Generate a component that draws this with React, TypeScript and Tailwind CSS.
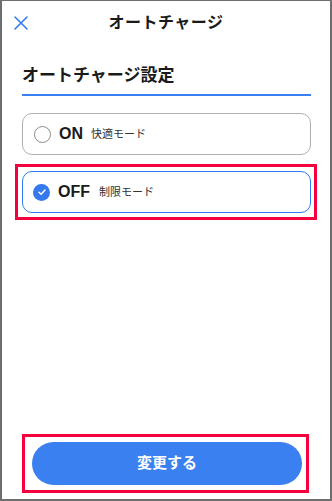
import React from "react";

const JP = { fontFamily: '"Liberation Sans", Arial, "Noto Sans CJK JP", sans-serif' };

export default function App() {
  return (
    <div
      style={JP}
      className="w-[332px] h-[501px] bg-white border-t border-l-2 border-r-2 border-b-2 border-[#6e6e6e] flex flex-col text-[#1a1a1a] overflow-hidden"
    >
      {/* Header */}
      <div className="grid grid-cols-[40px_1fr_40px] items-center h-[44px]">
        <div className="pl-[12px] flex items-center">
          <svg width="14" height="14" viewBox="0 0 14 14" fill="none">
            <path d="M1 1L13 13M13 1L1 13" stroke="#2f7cf6" strokeWidth="1.6" strokeLinecap="round" />
          </svg>
        </div>
        <div className="text-center text-[16px] font-bold leading-[24px] tracking-[0.5px]">オートチャージ</div>
        <div />
      </div>

      {/* Section heading */}
      <div className="ml-[20px] w-[289px] mt-[19px] pb-[6px] border-b-2 border-[#3a80f2]">
        <div className="text-[17px] font-bold leading-[24px]">オートチャージ設定</div>
      </div>

      {/* ON card */}
      <div className="ml-[20px] w-[289px] mt-[17px] h-[42px] rounded-[10px] border border-[#b0b0b0] flex items-center pl-[11px]">
        <div className="w-[17px] h-[17px] rounded-full border-[1.5px] border-[#8c8c8c] bg-white" />
        <span className="ml-[8px] text-[16px] font-bold leading-none">ON</span>
        <span className="ml-[8px] text-[11px] text-[#333] leading-none">快適モード</span>
      </div>

      {/* OFF card with highlight */}
      <div className="ml-[13px] w-[302px] mt-[9px] border-[3px] border-[#f5003d] p-[4px]">
        <div className="w-[289px] h-[42px] rounded-[10px] border-[1.5px] border-[#2f7cf6] flex items-center pl-[10px]">
          <div className="w-[17px] h-[17px] rounded-full bg-[#3479ee] flex items-center justify-center">
            <svg width="10" height="10" viewBox="0 0 10 10" fill="none">
              <path d="M2 5.2L4.1 7.2L8 3" stroke="white" strokeWidth="1.5" strokeLinecap="round" strokeLinejoin="round" />
            </svg>
          </div>
          <span className="ml-[8px] text-[16px] font-bold leading-none">OFF</span>
          <span className="ml-[9px] text-[11px] text-[#333] leading-none">制限モード</span>
        </div>
      </div>

      {/* Bottom button */}
      <div className="mt-auto mb-[6px] ml-[20px] w-[287px] h-[59px] border-[3px] border-[#f5003d] flex items-center pl-[7px] pr-[4px]">
        <button className="w-full h-[43px] rounded-full bg-[#3b80f1] text-white text-[15px] font-semibold">
          変更する
        </button>
      </div>
    </div>
  );
}
